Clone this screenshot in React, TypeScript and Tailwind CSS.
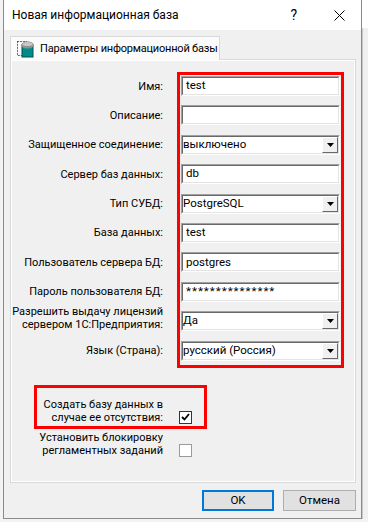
import React from 'react';

const font = { fontFamily: 'Roboto, "Liberation Sans", Arial, sans-serif' };

const Sunken: React.FC<{ children?: React.ReactNode }> = ({ children }) => (
  <div className="h-[20px] w-[159px] border-t border-l border-[#a0a0a0] border-b border-r border-b-white border-r-white">
    <div className="h-full w-full border-t border-l border-[#696969] border-b border-r border-b-[#e3e3e3] border-r-[#e3e3e3] bg-white flex items-center">
      {children}
    </div>
  </div>
);

const TextInput: React.FC<{ value?: string; secret?: boolean }> = ({ value, secret }) => (
  <Sunken>
    <span
      className={
        'pl-[3px] text-[11.5px] leading-none text-black whitespace-nowrap' + (secret ? ' tracking-[1px]' : '')
      }
    >
      {value}
    </span>
  </Sunken>
);

const Combo: React.FC<{ value: string }> = ({ value }) => (
  <Sunken>
    <span className="flex-1 text-[11.5px] leading-none text-black whitespace-nowrap">{value}</span>
    <div className="h-[16px] w-[16px] border-t border-l border-white border-b border-r border-b-[#696969] border-r-[#696969] bg-[#f0f0f0] flex items-center justify-center">
      <svg width="7" height="4" viewBox="0 0 7 4">
        <path d="M0 0h7L3.5 4z" fill="#000" />
      </svg>
    </div>
  </Sunken>
);

const rows: { label: string[]; field: React.ReactNode }[] = [
  { label: ['Имя:'], field: <TextInput value="test" /> },
  { label: ['Описание:'], field: <TextInput /> },
  { label: ['Защищенное соединение:'], field: <Combo value="выключено" /> },
  { label: ['Сервер баз данных:'], field: <TextInput value="db" /> },
  { label: ['Тип СУБД:'], field: <Combo value="PostgreSQL" /> },
  { label: ['База данных:'], field: <TextInput value="test" /> },
  { label: ['Пользователь сервера БД:'], field: <TextInput value="postgres" /> },
  { label: ['Пароль пользователя БД:'], field: <TextInput value="***************" secret /> },
  { label: ['Разрешить выдачу лицензий', 'сервером 1С:Предприятия:'], field: <Combo value="Да" /> },
  { label: ['Язык (Страна):'], field: <Combo value="русский (Россия)" /> },
];

const Checkbox: React.FC<{ checked?: boolean }> = ({ checked }) => (
  <div
    className={
      'h-[13px] w-[13px] bg-white flex items-center justify-center border ' +
      (checked ? 'border-[#333333]' : 'border-[#9a9a9a]')
    }
  >
    {checked && (
      <svg width="9" height="8" viewBox="0 0 9 8">
        <path d="M1 4l2.5 2.5L8 1" stroke="#000" strokeWidth="1.8" fill="none" />
      </svg>
    )}
  </div>
);

const DbIcon = () => (
  <svg width="17" height="18" viewBox="0 0 17 18" className="shrink-0">
    <rect x="0.5" y="1.5" width="9" height="14" fill="none" stroke="#d8c400" strokeDasharray="2 1" />
    <rect x="0.5" y="1.5" width="9" height="14" fill="none" stroke="#222" strokeDasharray="1 2" />
    <rect x="5" y="5" width="11" height="12" fill="#008b8b" stroke="#005050" />
    <ellipse cx="10.5" cy="4.5" rx="5.5" ry="2.5" fill="#a8a8a8" stroke="#707070" />
    <rect x="5" y="4.5" width="11" height="2" fill="#a8a8a8" />
    <ellipse cx="10.5" cy="6.5" rx="5.5" ry="2" fill="#909090" />
    <ellipse cx="10.5" cy="4" rx="5" ry="2" fill="#c8c8c8" />
  </svg>
);

export default function App() {
  return (
    <div className="relative w-[368px] h-[522px] overflow-hidden bg-[#f3f3f3] text-black" style={font}>
      <div className="flex">
        <div className="w-[3px]" />
        <div className="w-[359px] h-[519px] flex flex-col border-l border-r border-b border-[#8a8a8a] bg-[#f0f0f0]">
          {/* title bar */}
          <div className="h-[30px] bg-white flex items-center pl-[8px]">
            <span className="text-[12px] leading-none whitespace-nowrap">Новая информационная база</span>
            <span className="ml-auto text-[14px] leading-none mr-[37px]">?</span>
            <svg width="11" height="11" viewBox="0 0 11 11" className="mr-[16px]">
              <path d="M0.5 0.5l10 10M10.5 0.5l-10 10" stroke="#000" strokeWidth="1" />
            </svg>
          </div>

          <div className="flex-1 px-[6px] pt-[6px]">
            {/* tab */}
            <div className="relative z-10 w-[210px] h-[24px] bg-[#fbfbfb] border-t border-l border-r border-[#d9d9d9] flex items-center pl-[6px] gap-[6px]">
              <DbIcon />
              <span className="text-[11px] tracking-[-0.2px] leading-none whitespace-nowrap">
                Параметры информационной базы
              </span>
            </div>
            {/* panel */}
            <div className="-mt-[1px] w-[346px] h-[424px] border border-[#d9d9d9]">
              <div className="h-full w-full border border-white pt-[15px]">
                <div className="flex flex-col gap-y-[9.4px]">
                  {rows.map((r, i) => (
                    <div key={i} className="flex items-center h-[20px]">
                      <div
                        className={
                          'w-[151px] text-right text-[11px] leading-[13px] shrink-0 whitespace-nowrap' +
                          (r.label.length > 1 ? ' mb-[6px]' : '')
                        }
                      >
                        {r.label.map((l, j) => (
                          <div key={j}>{l}</div>
                        ))}
                      </div>
                      <div className="ml-[18px]">{r.field}</div>
                    </div>
                  ))}
                </div>

                <div className="mt-[37px] flex items-end">
                  <div className="w-[151px] text-right text-[11px] leading-[13px] shrink-0 whitespace-nowrap">
                    <div>Создать базу данных в</div>
                    <div>случае ее отсутствия:</div>
                  </div>
                  <div className="ml-[16px]">
                    <Checkbox checked />
                  </div>
                </div>
                <div className="mt-[7px] flex items-end">
                  <div className="w-[151px] text-right text-[11px] leading-[13px] shrink-0 whitespace-nowrap">
                    <div>Установить блокировку</div>
                    <div>регламентных заданий</div>
                  </div>
                  <div className="ml-[16px]">
                    <Checkbox />
                  </div>
                </div>
              </div>
            </div>

            {/* buttons */}
            <div className="mt-[7px] w-[346px] flex justify-end gap-[9px]">
              <button className="w-[72px] h-[21px] bg-[#e1e1e1] border-2 border-[#0078d7] text-[11.5px] leading-none">
                OK
              </button>
              <button className="w-[73px] h-[21px] bg-[#e1e1e1] border border-[#adadad] text-[11.5px] leading-none">
                Отмена
              </button>
            </div>
          </div>
        </div>
        {/* background window strip */}
        <div className="w-[6px] h-[519px] flex flex-col">
          <div className="h-[28px] bg-white" />
          <div className="flex-1 bg-[#f0f0f0] border-l border-[#c8c8c8]" />
        </div>
      </div>

      {/* red annotation frames */}
      <div className="absolute left-[177px] top-[72px] w-[167px] h-[296px] border-[3px] border-[#ff0000]" />
      <div className="absolute left-[34px] top-[385px] w-[173px] h-[44px] border-[3px] border-[#ff0000]" />
    </div>
  );
}
